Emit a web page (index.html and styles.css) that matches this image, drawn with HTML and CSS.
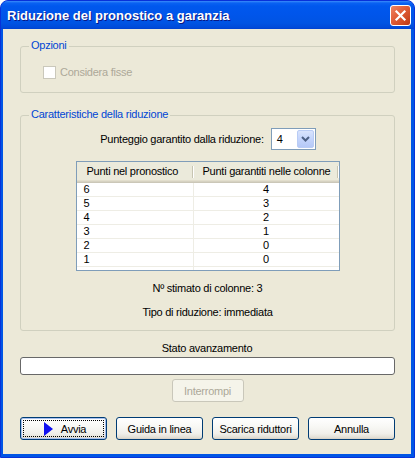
FILE: index.html
```html
<!DOCTYPE html>
<html>
<head>
<meta charset="utf-8">
<link rel="stylesheet" href="styles.css">
</head>
<body>
<div class="window">
  <div class="titlebar">
    <span class="title">Riduzione del pronostico a garanzia</span>
    <div class="close">
      <svg width="21" height="21" viewBox="0 0 21 21"><path d="M6.5 6.5 L14.5 14.5 M14.5 6.5 L6.5 14.5" stroke="#fff" stroke-width="2.2" stroke-linecap="square"/></svg>
    </div>
  </div>
  <div class="client">
    <div class="group g1">
      <span class="legend">Opzioni</span>
      <div class="check"><span class="box"></span><span>Considera fisse</span></div>
    </div>
    <div class="group g2">
      <span class="legend">Caratteristiche della riduzione</span>
      <div class="punteggio">
        <span>Punteggio garantito dalla riduzione:</span>
        <div class="combo">
          <span class="val">4</span>
          <span class="drop"><svg width="9" height="6" viewBox="0 0 9 6"><path d="M1 1 L4.5 4.5 L8 1" fill="none" stroke="#4D6185" stroke-width="2"/></svg></span>
        </div>
      </div>
      <div class="listview">
        <div class="lv-head">
          <div class="hc c1">Punti nel pronostico</div>
          <div class="hc c2">Punti garantiti nelle colonne</div>
        </div>
        <div class="row"><div class="c1">6</div><div class="c2">4</div></div>
        <div class="row"><div class="c1">5</div><div class="c2">3</div></div>
        <div class="row"><div class="c1">4</div><div class="c2">2</div></div>
        <div class="row"><div class="c1">3</div><div class="c2">1</div></div>
        <div class="row"><div class="c1">2</div><div class="c2">0</div></div>
        <div class="row"><div class="c1">1</div><div class="c2">0</div></div>
        <div class="row tail"><div class="c1"></div><div class="c2"></div></div>
      </div>
      <div class="info">Nº stimato di colonne: 3</div>
      <div class="info">Tipo di riduzione: immediata</div>
    </div>
    <div class="stato">Stato avanzamento</div>
    <div class="progress"></div>
    <div class="btn disabled interrompi">Interrompi</div>
    <div class="buttons">
      <div class="btn default">
        <span class="focus">
          <svg width="9" height="14" viewBox="0 0 9 14"><polygon points="0,0 9,7 0,14" fill="#1010F0"/></svg>
          <span>Avvia</span>
        </span>
      </div>
      <div class="btn">Guida in linea</div>
      <div class="btn">Scarica riduttori</div>
      <div class="btn">Annulla</div>
    </div>
  </div>
</div>
</body>
</html>
```
FILE: styles.css
```css
* { box-sizing: border-box; }
html, body { margin: 0; padding: 0; background: #fff; }
body {
  font-family: "Liberation Sans", Arial, sans-serif;
  font-size: 11px;
  letter-spacing: -0.25px;
  color: #000;
}
.window {
  width: 415px;
  height: 458px;
  background: #0055E5;
  border: 1px solid #0831D9;
  border-radius: 8px 8px 0 0;
  display: flex;
  flex-direction: column;
  overflow: hidden;
}
.titlebar {
  height: 28px;
  flex: none;
  display: flex;
  align-items: flex-start;
  justify-content: space-between;
  background: linear-gradient(to bottom, #3A8CFB 0px, #0A62F2 2px, #0058EE 5px, #0055EA 14px, #0054E3 22px, #0049D8 27px, #003FCC 28px);
  padding-left: 6px;
}
.title {
  color: #fff;
  font-family: "Liberation Sans", Arial, sans-serif;
  font-weight: bold;
  font-size: 13px;
  letter-spacing: 0;
  line-height: 16px;
  margin-top: 7px;
  text-shadow: 1px 1px 0 #0A1883;
}
.close {
  width: 21px;
  height: 21px;
  margin-top: 4px;
  margin-right: 3px;
  border: 1px solid #fff;
  border-radius: 3px;
  background: linear-gradient(135deg, #EE8463 0%, #E2603A 40%, #CF4A23 75%, #B93614 100%);
  display: flex;
  align-items: center;
  justify-content: center;
}
.close svg { display: block; margin: -1px; }
.client {
  flex: 1;
  margin: 0 3px 3px 2px;
  background: #ECE9D8;
  display: flex;
  flex-direction: column;
}
.group {
  position: relative;
  margin-left: 17px;
  margin-right: 16px;
  border: 1px solid #D0D0BF;
  border-radius: 3px;
}
.legend {
  position: absolute;
  top: -8px;
  left: 8px;
  padding: 0 2px;
  background: #ECE9D8;
  color: #0046D5;
  line-height: 13px;
}
.g1 {
  margin-top: 17px;
  height: 47px;
  padding: 19px 0 0 22px;
}
.check {
  display: flex;
  align-items: center;
  color: #ACA899;
  line-height: 13px;
}
.check .box {
  width: 13px;
  height: 13px;
  border: 1px solid #CAC8BB;
  background: #fff;
  margin-right: 4px;
}
.g2 {
  margin-top: 22px;
  height: 216px;
  padding-top: 12px;
  display: flex;
  flex-direction: column;
  align-items: center;
}
.punteggio {
  display: flex;
  align-items: center;
  gap: 7px;
  height: 22px;
  margin-left: 1px;
}
.combo {
  width: 45px;
  height: 22px;
  border: 1px solid #7F9DB9;
  background: #fff;
  display: flex;
  align-items: center;
  justify-content: space-between;
  padding: 1px;
}
.combo .val { padding-left: 4px; }
.drop {
  width: 17px;
  height: 18px;
  border: 1px solid #B9CCF5;
  border-radius: 2px;
  background: linear-gradient(to bottom, #D9E4FD 0%, #C4D5FC 50%, #B5C9F7 100%);
  display: flex;
  align-items: center;
  justify-content: center;
}
.drop svg { display: block; }
.listview {
  margin-top: 11px;
  width: 264px;
  height: 110px;
  border: 1px solid #7F9DB9;
  background: #fff;
  display: flex;
  flex-direction: column;
  overflow: hidden;
}
.lv-head {
  display: grid;
  grid-template-columns: 117px 1fr;
  height: 21px;
  flex: none;
  background: linear-gradient(to bottom, #EBEADB 0, #EBEADB 18px, #E2DECD 18px, #E2DECD 19px, #D6D2C2 19px, #D6D2C2 20px, #CBC7B8 20px);
}
.hc {
  position: relative;
  line-height: 18px;
  white-space: nowrap;
}
.hc.c1 { padding-left: 10px; }
.hc.c2 { padding-left: 9px; }
.hc::after {
  content: "";
  position: absolute;
  right: 1px;
  top: 4px;
  width: 1px;
  height: 12px;
  background: #C7C5B2;
  box-shadow: 1px 0 0 #fff;
}
.row {
  display: grid;
  grid-template-columns: 117px 1fr;
  height: 14px;
  flex: none;
  line-height: 13px;
}
.row > div { border-bottom: 1px solid #EEEDE5; }
.row .c1 { border-right: 1px solid #EEEDE5; padding-left: 7px; }
.row .c2 { text-align: center; }
.row.tail > div { border-bottom: none; }
.info {
  margin-top: 11px;
  line-height: 13px;
  text-align: center;
}
.stato {
  margin-top: 11px;
  line-height: 13px;
  text-align: center;
}
.progress {
  margin: 2px 16px 0 17px;
  height: 18px;
  border: 1px solid #686868;
  border-radius: 3px;
  background: #fff;
}
.btn {
  width: 87px;
  height: 23px;
  border: 1px solid #003C74;
  border-radius: 3px;
  background: linear-gradient(to bottom, #FFFFFF 0%, #F8F8F5 40%, #F0EFEA 75%, #E3E0D6 92%, #D6D0C5 100%);
  display: flex;
  align-items: center;
  justify-content: center;
  white-space: nowrap;
}
.btn.disabled {
  border-color: #C9C7BA;
  background: #F5F4EA;
  color: #ACA899;
}
.interrompi {
  width: 72px;
  align-self: center;
  margin-top: 4px;
  margin-left: 1px;
}
.buttons {
  margin-top: 15px;
  padding: 0 16px 0 17px;
  display: flex;
  gap: 9px;
}
.btn.default {
  box-shadow: inset 0 0 0 1px #A9C1EF;
  padding: 2px;
}
.focus {
  width: 100%;
  height: 100%;
  border: 1px dotted #000;
  display: flex;
  align-items: center;
  justify-content: center;
  gap: 8px;
  padding-left: 3px;
}
.focus svg { display: block; }
```
